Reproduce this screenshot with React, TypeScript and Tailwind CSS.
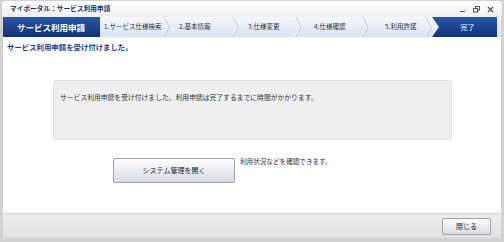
import React from "react";

const font = { fontFamily: '"Noto Sans CJK JP", "Noto Sans", sans-serif' };

const steps = [
  { label: "1.サービス仕様検索", w: "w-[70px]", pl: "pl-[4px]" },
  { label: "2.基本情報", w: "w-[69px]", pl: "pl-[9px]" },
  { label: "3.仕様変更", w: "w-[63px]", pl: "pl-[9px]" },
  { label: "4.仕様確認", w: "w-[67px]", pl: "pl-[12px]" },
  { label: "5.利用許諾", w: "w-[63px]", pl: "pl-[16px]" },
];

const Chevron = () => (
  <svg width="7" height="20" viewBox="0 0 7 20" className="absolute right-0 top-0">
    <polyline points="0.5,0 6,10 0.5,20" fill="none" stroke="#b4bfd0" strokeWidth="1" />
    <polyline points="-0.5,0 5,10 -0.5,20" fill="none" stroke="#ffffff" strokeWidth="1" />
  </svg>
);

const App = () => {
  return (
    <div
      className="w-[504px] h-[242px] bg-[#d2d2d2] pt-[1px] px-[3px] pb-[4px] flex flex-col overflow-hidden"
      style={font}
    >
      {/* title bar */}
      <div className="h-[16px] -mx-[1px] rounded-t-[3px] bg-gradient-to-b from-white to-[#efefef] flex items-center justify-between pl-[8px] pr-[8px]">
        <span className="text-[6.6px] font-bold text-[#1d2f55] tracking-[0.1px]">
          マイポータル：サービス利用申請
        </span>
        <div className="flex items-center gap-[7px] text-[#555]">
          <svg width="7" height="7" viewBox="0 0 7 7">
            <line x1="1" y1="5.5" x2="6" y2="5.5" stroke="#555" strokeWidth="1" />
          </svg>
          <svg width="7" height="7" viewBox="0 0 7 7">
            <rect x="2.5" y="0.5" width="4" height="3.5" fill="none" stroke="#555" />
            <rect x="0.5" y="2.5" width="4" height="3.5" fill="#fff" stroke="#555" />
          </svg>
          <svg width="7" height="7" viewBox="0 0 7 7">
            <path d="M1 1 L6 6 M6 1 L1 6" stroke="#555" strokeWidth="1.3" />
          </svg>
        </div>
      </div>

      {/* main panel */}
      <div className="flex-1 bg-white flex flex-col">
        {/* step bar */}
        <div className="h-[20px] flex bg-gradient-to-b from-[#f4f7fc] to-[#d9e2f0]">
          <div className="w-[97px] h-full bg-gradient-to-b from-[#2b56a6] to-[#0f3379] flex items-center pl-[14px]">
            <span className="text-[8.5px] font-bold text-white">サービス利用申請</span>
          </div>
          {steps.map((s) => (
            <div key={s.label} className={`relative h-full ${s.w} ${s.pl} flex items-center`}>
              <span className="text-[6.5px] text-[#333] whitespace-nowrap">{s.label}</span>
              <Chevron />
            </div>
          ))}
          <div className="w-[65px] h-full bg-gradient-to-b from-[#2b56a6] to-[#0f3379] flex items-center justify-center pl-[6px] [clip-path:polygon(0_0,100%_0,100%_100%,0_100%,7px_50%)]">
            <span className="text-[7px] text-white">完了</span>
          </div>
        </div>

        {/* content */}
        <div className="flex-1 flex flex-col">
          <p className="mt-[5px] pl-[4px] text-[7.4px] leading-[9px] font-bold text-[#1a3a9c]">
            サービス利用申請を受け付けました。
          </p>

          <div className="mt-[29px] ml-[50px] w-[399px] h-[60px] rounded-[3px] bg-[#efefef] border border-[#e2e2e2] pl-[6px] pt-[12px]">
            <p className="text-[6.8px] leading-[9px] text-[#333]">
              サービス利用申請を受け付けました。利用申請は完了するまでに時間がかかります。
            </p>
          </div>

          <div className="mt-[18px] ml-[110px] flex items-start gap-[5px]">
            <button className="w-[122px] h-[25px] rounded-[2px] border border-[#9ea3ab] bg-gradient-to-b from-[#fdfdfe] to-[#d7dce5] text-[7px] text-[#222] flex items-center justify-center">
              システム管理を開く
            </button>
            <span className="text-[6.6px] leading-[9px] text-[#333] -mt-[1px]">
              利用状況などを確認できます。
            </span>
          </div>
        </div>
      </div>

      {/* footer */}
      <div className="h-[25px] bg-gradient-to-b from-[#eeeeee] to-[#e1e1e1] border-t border-[#d6d6d6] flex items-center justify-end pr-[10px]">
        <button className="w-[49px] h-[17px] rounded-[2px] border border-[#9ea3ab] bg-gradient-to-b from-[#fdfdfe] to-[#d7dce5] text-[7px] text-[#222] flex items-center justify-center">
          閉じる
        </button>
      </div>
    </div>
  );
};

export default App;
